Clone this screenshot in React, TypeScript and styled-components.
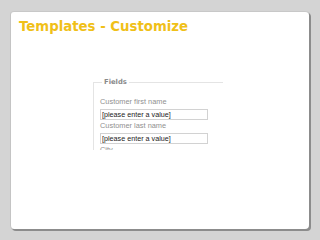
import React from "react";
import styled, { createGlobalStyle } from "styled-components";

const Global = createGlobalStyle`
  html, body { margin: 0; padding: 0; background: #d4d4d4; }
  body { width: 320px; height: 240px; overflow: hidden; }
`;

const Page = styled.div`
  width: 320px;
  height: 240px;
  box-sizing: border-box;
  padding: 11px 11px 11px 10px;
  display: flex;
`;

const Card = styled.div`
  flex: 1;
  background: #fff;
  border-radius: 4px;
  border-left: 1px solid #c4c4c4;
  border-top: 1px solid #c8c8c8;
  box-shadow: 2px 2px 0 #8c8c8c, 1px 1px 1px #9a9a9a;
  display: flex;
  flex-direction: column;
  padding: 6px 0 0 8px;
`;

const Title = styled.h1`
  margin: 0;
  font-family: "DejaVu Sans", Verdana, sans-serif;
  font-weight: bold;
  font-size: 13.3px;
  color: #f0c018;
  line-height: 18px;
`;

const Shot = styled.div`
  margin: 35px 0 0 74px;
  width: 130px;
  height: 79px;
  overflow: hidden;
`;

const Fieldset = styled.fieldset`
  margin: 7px 0 0 0;
  padding: 5px 0 0 6px;
  border: none;
  border-top: 1px solid #e4e4e4;
  border-left: 1px solid #e4e4e4;
  font-family: "Liberation Sans", Arial, sans-serif;
`;

const Legend = styled.legend`
  font-family: "DejaVu Sans", Verdana, sans-serif;
  font-size: 6.8px;
  font-weight: bold;
  color: #8a8a8a;
  padding: 0 2px;
  margin-left: 2px;
`;

const Label = styled.div<{ $first?: boolean }>`
  font-size: 7.4px;
  color: #909090;
  line-height: 10px;
  margin-top: ${(p) => (p.$first ? "6px" : "1px")};
`;

const Input = styled.div`
  width: 105px;
  height: 9px;
  border: 1px solid #d2d2d2;
  font-size: 7.2px;
  line-height: 9px;
  color: #222;
  padding-left: 1px;
  margin-top: 2px;
`;

export default function App() {
  return (
    <>
      <Global />
      <Page>
        <Card>
          <Title>Templates - Customize</Title>
          <Shot>
            <Fieldset>
              <Legend>Fields</Legend>
              <Label $first>Customer first name</Label>
              <Input>[please enter a value]</Input>
              <Label>Customer last name</Label>
              <Input>[please enter a value]</Input>
              <Label>City</Label>
            </Fieldset>
          </Shot>
        </Card>
      </Page>
    </>
  );
}
